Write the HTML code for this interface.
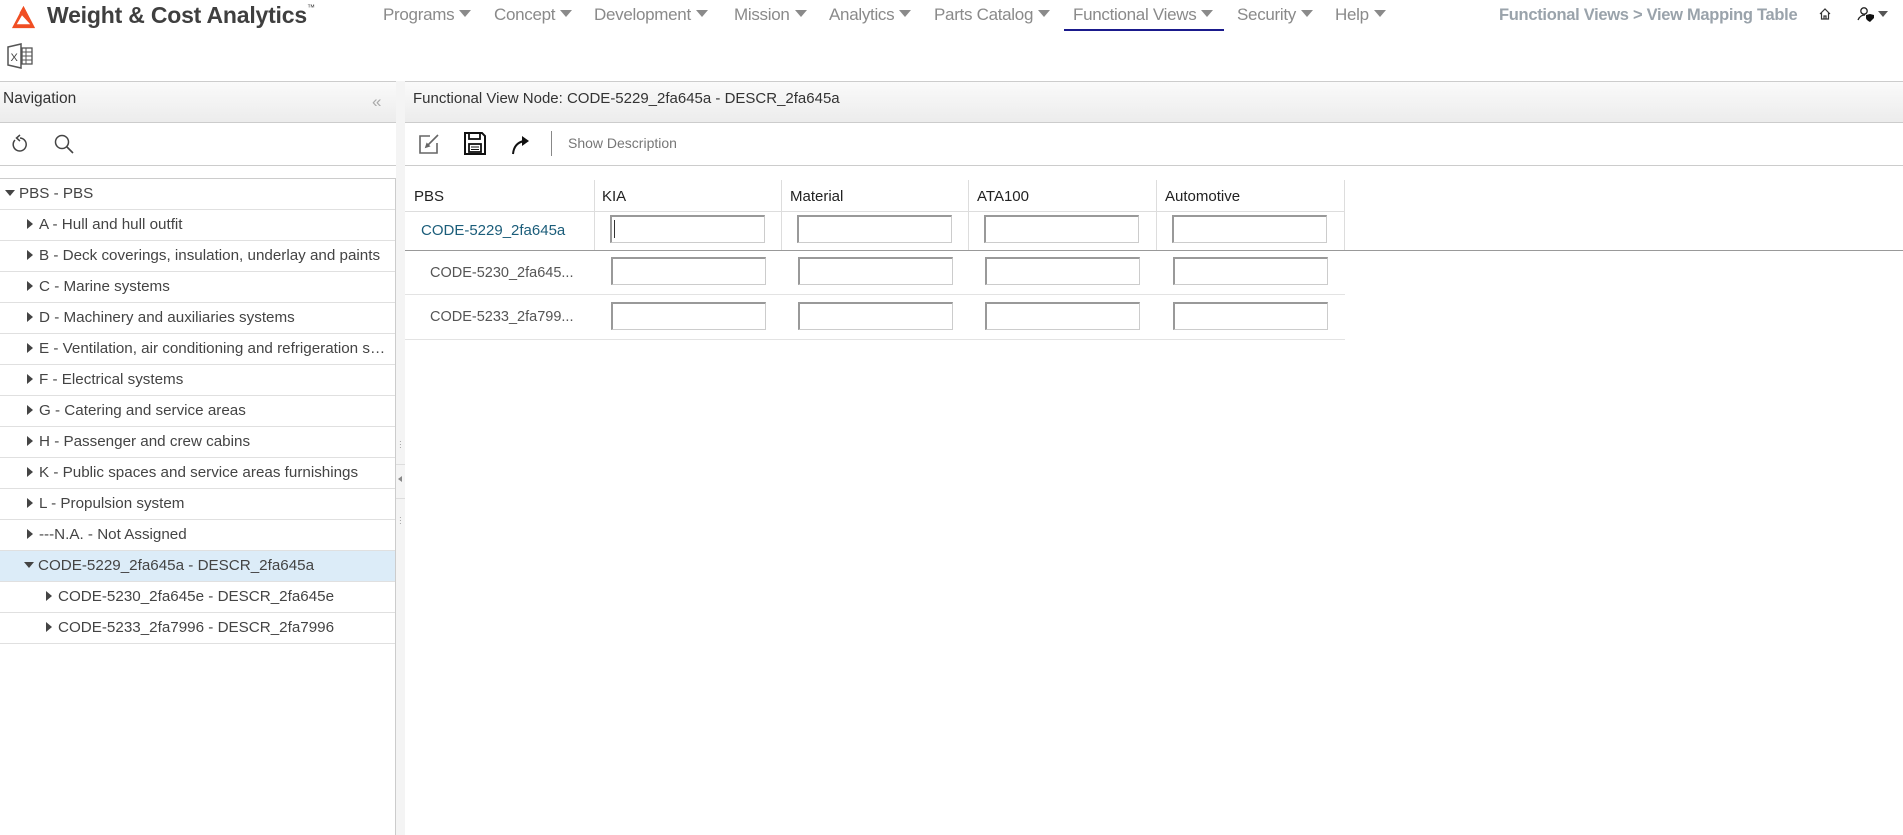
<!DOCTYPE html>
<html><head><meta charset="utf-8"><style>
*{box-sizing:border-box;margin:0;padding:0}
body{width:1903px;height:835px;overflow:hidden;background:#fff;font-family:"Liberation Sans",sans-serif;position:relative}
.abs{position:absolute}
.nav{top:5px;font-size:17px;color:#8a8a8a;white-space:nowrap;letter-spacing:-0.3px}
.nav .c{display:inline-block;width:0;height:0;border-left:6px solid transparent;border-right:6px solid transparent;border-top:7px solid #8a8a8a;margin-left:5px;vertical-align:3px}
.hdr{background:linear-gradient(#fafafa,#ececec);border-top:1px solid #ccc;border-bottom:1px solid #ccc}
.tree{left:0;width:396px;font-size:15.2px;color:#444}
.row{height:31px;border-bottom:1px solid #e0e0e0;line-height:30px;white-space:nowrap;overflow:hidden;text-overflow:ellipsis;padding-right:6px}
.tr{display:inline-block;width:0;height:0;border-top:5px solid transparent;border-bottom:5px solid transparent;border-left:6px solid #444;margin-right:6px;vertical-align:0}
.td{display:inline-block;width:0;height:0;border-left:5px solid transparent;border-right:5px solid transparent;border-top:6px solid #444;margin-right:4px;vertical-align:2px}
.inp{position:absolute;width:155px;height:28px;border:1px solid #ccc;border-top:2px solid #999;border-left:2px solid #999;background:#fff}
.th{position:absolute;top:180px;height:31px;line-height:34px;font-size:15px;color:#222;border-right:1px solid #ddd}
</style></head><body>
<svg class="abs" style="left:10px;top:5px" width="27" height="25" viewBox="0 0 28 26"><path d="M14 1 L2 24 L26 24 Z M14 8 L21 20 L7 20 Z" fill="#f04e23" fill-rule="evenodd"/><path d="M14 1 L10 8 L21 20 L26 24Z" fill="#f04e23"/></svg>
<div class="abs" style="left:47px;top:2px;font-size:23px;font-weight:bold;color:#3f3f3f;letter-spacing:-0.2px">Weight &amp; Cost Analytics<sup style="font-size:8px;font-weight:normal;vertical-align:13px">™</sup></div>
<div class="abs nav" style="left:383px">Programs<span class="c"></span></div>
<div class="abs nav" style="left:494px">Concept<span class="c"></span></div>
<div class="abs nav" style="left:594px">Development<span class="c"></span></div>
<div class="abs nav" style="left:734px">Mission<span class="c"></span></div>
<div class="abs nav" style="left:829px">Analytics<span class="c"></span></div>
<div class="abs nav" style="left:934px">Parts Catalog<span class="c"></span></div>
<div class="abs nav" style="left:1073px">Functional Views<span class="c"></span></div>
<div class="abs" style="left:1064px;top:29px;width:160px;height:2px;background:#1a1a8c"></div>
<div class="abs nav" style="left:1237px">Security<span class="c"></span></div>
<div class="abs nav" style="left:1335px">Help<span class="c"></span></div>
<div class="abs" style="left:1499px;top:6px;font-size:16.5px;font-weight:bold;color:#9aa3ab;letter-spacing:-0.3px">Functional Views &gt; View Mapping Table</div>
<svg class="abs" style="left:1818px;top:7px" width="14" height="14" viewBox="0 0 14 14"><path d="M2 7 L7 2 L12 7 M3.5 6 V12 H10.5 V6 M6 12 V9 H8 V12" fill="none" stroke="#333" stroke-width="1.2"/></svg>
<svg class="abs" style="left:1857px;top:6px" width="34" height="16" viewBox="0 0 34 16"><circle cx="7" cy="5" r="3.2" fill="none" stroke="#222" stroke-width="1.3"/><path d="M1 14 Q3 9 8 9" fill="none" stroke="#222" stroke-width="1.3"/><path d="M9 9 L13 8 L17 9 V12 Q13 16 13 16 Q9 14 9 12Z" fill="#111"/><path d="M21 5 H31 L26 11Z" fill="#555"/></svg>
<svg class="abs" style="left:7px;top:43px" width="27" height="26" viewBox="0 0 27 26"><path d="M1 4 L14 1 V25 L1 22Z" fill="#fff" stroke="#555" stroke-width="1.5"/><text x="3.5" y="18" font-size="11" font-family="Liberation Sans" fill="#444">X</text><rect x="15" y="5" width="10" height="16" fill="none" stroke="#555" stroke-width="1.3"/><path d="M15 9H25M15 13H25M15 17H25M19 5V21" stroke="#555" stroke-width="1"/></svg>
<div class="abs hdr" style="left:0;top:81px;width:396px;height:42px"></div>
<div class="abs" style="left:3px;top:90px;font-size:15.5px;color:#333">Navigation</div>
<div class="abs" style="left:372px;top:92px;font-size:17px;color:#aaa">«</div>
<svg class="abs" style="left:10px;top:134px" width="20" height="20" viewBox="0 0 20 20"><path d="M5 6 A6.5 6.5 0 1 0 10 4" fill="none" stroke="#444" stroke-width="1.5"/><path d="M10 1 L6.5 4 L10 7" fill="none" stroke="#444" stroke-width="1.5"/></svg>
<svg class="abs" style="left:53px;top:133px" width="22" height="22" viewBox="0 0 22 22"><circle cx="9" cy="9" r="6.5" fill="none" stroke="#444" stroke-width="1.5"/><path d="M14 14 L20 20" stroke="#444" stroke-width="1.6"/></svg>
<div class="abs" style="left:0;top:165px;width:396px;height:1px;background:#ccc"></div>
<div class="abs" style="left:0;top:178px;width:396px;height:1px;background:#ccc"></div>
<div class="abs tree" style="top:179px">
<div class="row" style="padding-left:5px"><span class="td"></span>PBS - PBS</div>
<div class="row" style="padding-left:27px"><span class="tr"></span>A - Hull and hull outfit</div>
<div class="row" style="padding-left:27px"><span class="tr"></span>B - Deck coverings, insulation, underlay and paints</div>
<div class="row" style="padding-left:27px"><span class="tr"></span>C - Marine systems</div>
<div class="row" style="padding-left:27px"><span class="tr"></span>D - Machinery and auxiliaries systems</div>
<div class="row" style="padding-left:27px"><span class="tr"></span>E - Ventilation, air conditioning and refrigeration systems</div>
<div class="row" style="padding-left:27px"><span class="tr"></span>F - Electrical systems</div>
<div class="row" style="padding-left:27px"><span class="tr"></span>G - Catering and service areas</div>
<div class="row" style="padding-left:27px"><span class="tr"></span>H - Passenger and crew cabins</div>
<div class="row" style="padding-left:27px"><span class="tr"></span>K - Public spaces and service areas furnishings</div>
<div class="row" style="padding-left:27px"><span class="tr"></span>L - Propulsion system</div>
<div class="row" style="padding-left:27px"><span class="tr"></span>---N.A. - Not Assigned</div>
<div class="row" style="padding-left:24px;background:#dcecf8"><span class="td"></span>CODE-5229_2fa645a - DESCR_2fa645a</div>
<div class="row" style="padding-left:46px"><span class="tr"></span>CODE-5230_2fa645e - DESCR_2fa645e</div>
<div class="row" style="padding-left:46px"><span class="tr"></span>CODE-5233_2fa7996 - DESCR_2fa7996</div>
</div>
<div class="abs" style="left:395px;top:179px;width:1px;height:656px;background:#ccc"></div>
<div class="abs" style="left:396px;top:81px;width:9px;height:754px;background:#f4f4f4"></div>
<div class="abs" style="left:396px;top:464px;width:9px;height:1px;background:#ddd"></div>
<div class="abs" style="left:396px;top:498px;width:9px;height:1px;background:#ddd"></div>
<div class="abs" style="left:399px;top:440px;font-size:8px;color:#888;line-height:3px">·<br>·<br>·</div>
<div class="abs" style="left:399px;top:516px;font-size:8px;color:#888;line-height:3px">·<br>·<br>·</div>
<div class="abs" style="left:398px;top:476px;width:0;height:0;border-top:3px solid transparent;border-bottom:3px solid transparent;border-right:4px solid #888"></div>
<div class="abs hdr" style="left:405px;top:81px;width:1498px;height:42px"></div>
<div class="abs" style="left:413px;top:90px;font-size:15px;color:#333">Functional View Node: CODE-5229_2fa645a - DESCR_2fa645a</div>
<svg class="abs" style="left:418px;top:132px" width="24" height="24" viewBox="0 0 24 24"><path d="M12 4 H2 V21 H19 V11" fill="none" stroke="#666" stroke-width="1.6"/><path d="M9 14 L20 3 M8 15 L9 12 L11 14Z" stroke="#666" stroke-width="1.6" fill="#666"/></svg>
<svg class="abs" style="left:463px;top:131px" width="24" height="25" viewBox="0 0 24 25"><path d="M2 2 H19 L22 5 V23 H2Z" fill="none" stroke="#111" stroke-width="2"/><rect x="6" y="2" width="11" height="6" fill="none" stroke="#111" stroke-width="1.8"/><rect x="6" y="13" width="12" height="8" fill="none" stroke="#111" stroke-width="1.8"/><path d="M8 16H16M8 18.5H16" stroke="#111" stroke-width="1"/></svg>
<svg class="abs" style="left:510px;top:133px" width="22" height="22" viewBox="0 0 22 22"><path d="M3 21 Q4 10 14 8" fill="none" stroke="#111" stroke-width="2"/><path d="M12 3 L19 8 L12 13Z" fill="#111"/></svg>
<div class="abs" style="left:551px;top:131px;width:1px;height:25px;background:#888"></div>
<div class="abs" style="left:568px;top:135px;font-size:14px;color:#777">Show Description</div>
<div class="abs" style="left:405px;top:165px;width:1498px;height:1px;background:#ccc"></div>
<div class="th" style="left:405px;width:190px;padding-left:9px">PBS</div>
<div class="th" style="left:595px;width:187px;padding-left:7px">KIA</div>
<div class="th" style="left:782px;width:187px;padding-left:8px">Material</div>
<div class="th" style="left:969px;width:188px;padding-left:8px">ATA100</div>
<div class="th" style="left:1157px;width:188px;padding-left:8px">Automotive</div>
<div class="abs" style="left:405px;top:211px;width:940px;height:1px;background:#ddd"></div>
<div class="abs" style="left:594px;top:211px;width:1px;height:39px;background:#ddd"></div>
<div class="abs" style="left:781px;top:211px;width:1px;height:39px;background:#ddd"></div>
<div class="abs" style="left:968px;top:211px;width:1px;height:39px;background:#ddd"></div>
<div class="abs" style="left:1156px;top:211px;width:1px;height:39px;background:#ddd"></div>
<div class="abs" style="left:1344px;top:211px;width:1px;height:39px;background:#ddd"></div>
<div class="abs" style="left:421px;top:222px;font-size:15px;color:#1b5d7a">CODE-5229_2fa645a</div>
<div class="abs" style="left:405px;top:250px;width:1498px;height:1px;background:#999"></div>
<div class="abs" style="left:430px;top:265px;font-size:14.5px;color:#555">CODE-5230_2fa645...</div>
<div class="abs" style="left:405px;top:294px;width:940px;height:1px;background:#e3e3e3"></div>
<div class="abs" style="left:430px;top:309px;font-size:14.5px;color:#555">CODE-5233_2fa799...</div>
<div class="abs" style="left:405px;top:339px;width:940px;height:1px;background:#e3e3e3"></div>
<div class="inp" style="left:610px;top:215px"></div>
<div class="abs" style="left:614px;top:220px;width:1px;height:18px;background:#333"></div>
<div class="inp" style="left:797px;top:215px"></div>
<div class="inp" style="left:984px;top:215px"></div>
<div class="inp" style="left:1172px;top:215px"></div>
<div class="inp" style="left:611px;top:257px"></div>
<div class="inp" style="left:798px;top:257px"></div>
<div class="inp" style="left:985px;top:257px"></div>
<div class="inp" style="left:1173px;top:257px"></div>
<div class="inp" style="left:611px;top:302px"></div>
<div class="inp" style="left:798px;top:302px"></div>
<div class="inp" style="left:985px;top:302px"></div>
<div class="inp" style="left:1173px;top:302px"></div>
</body></html>
